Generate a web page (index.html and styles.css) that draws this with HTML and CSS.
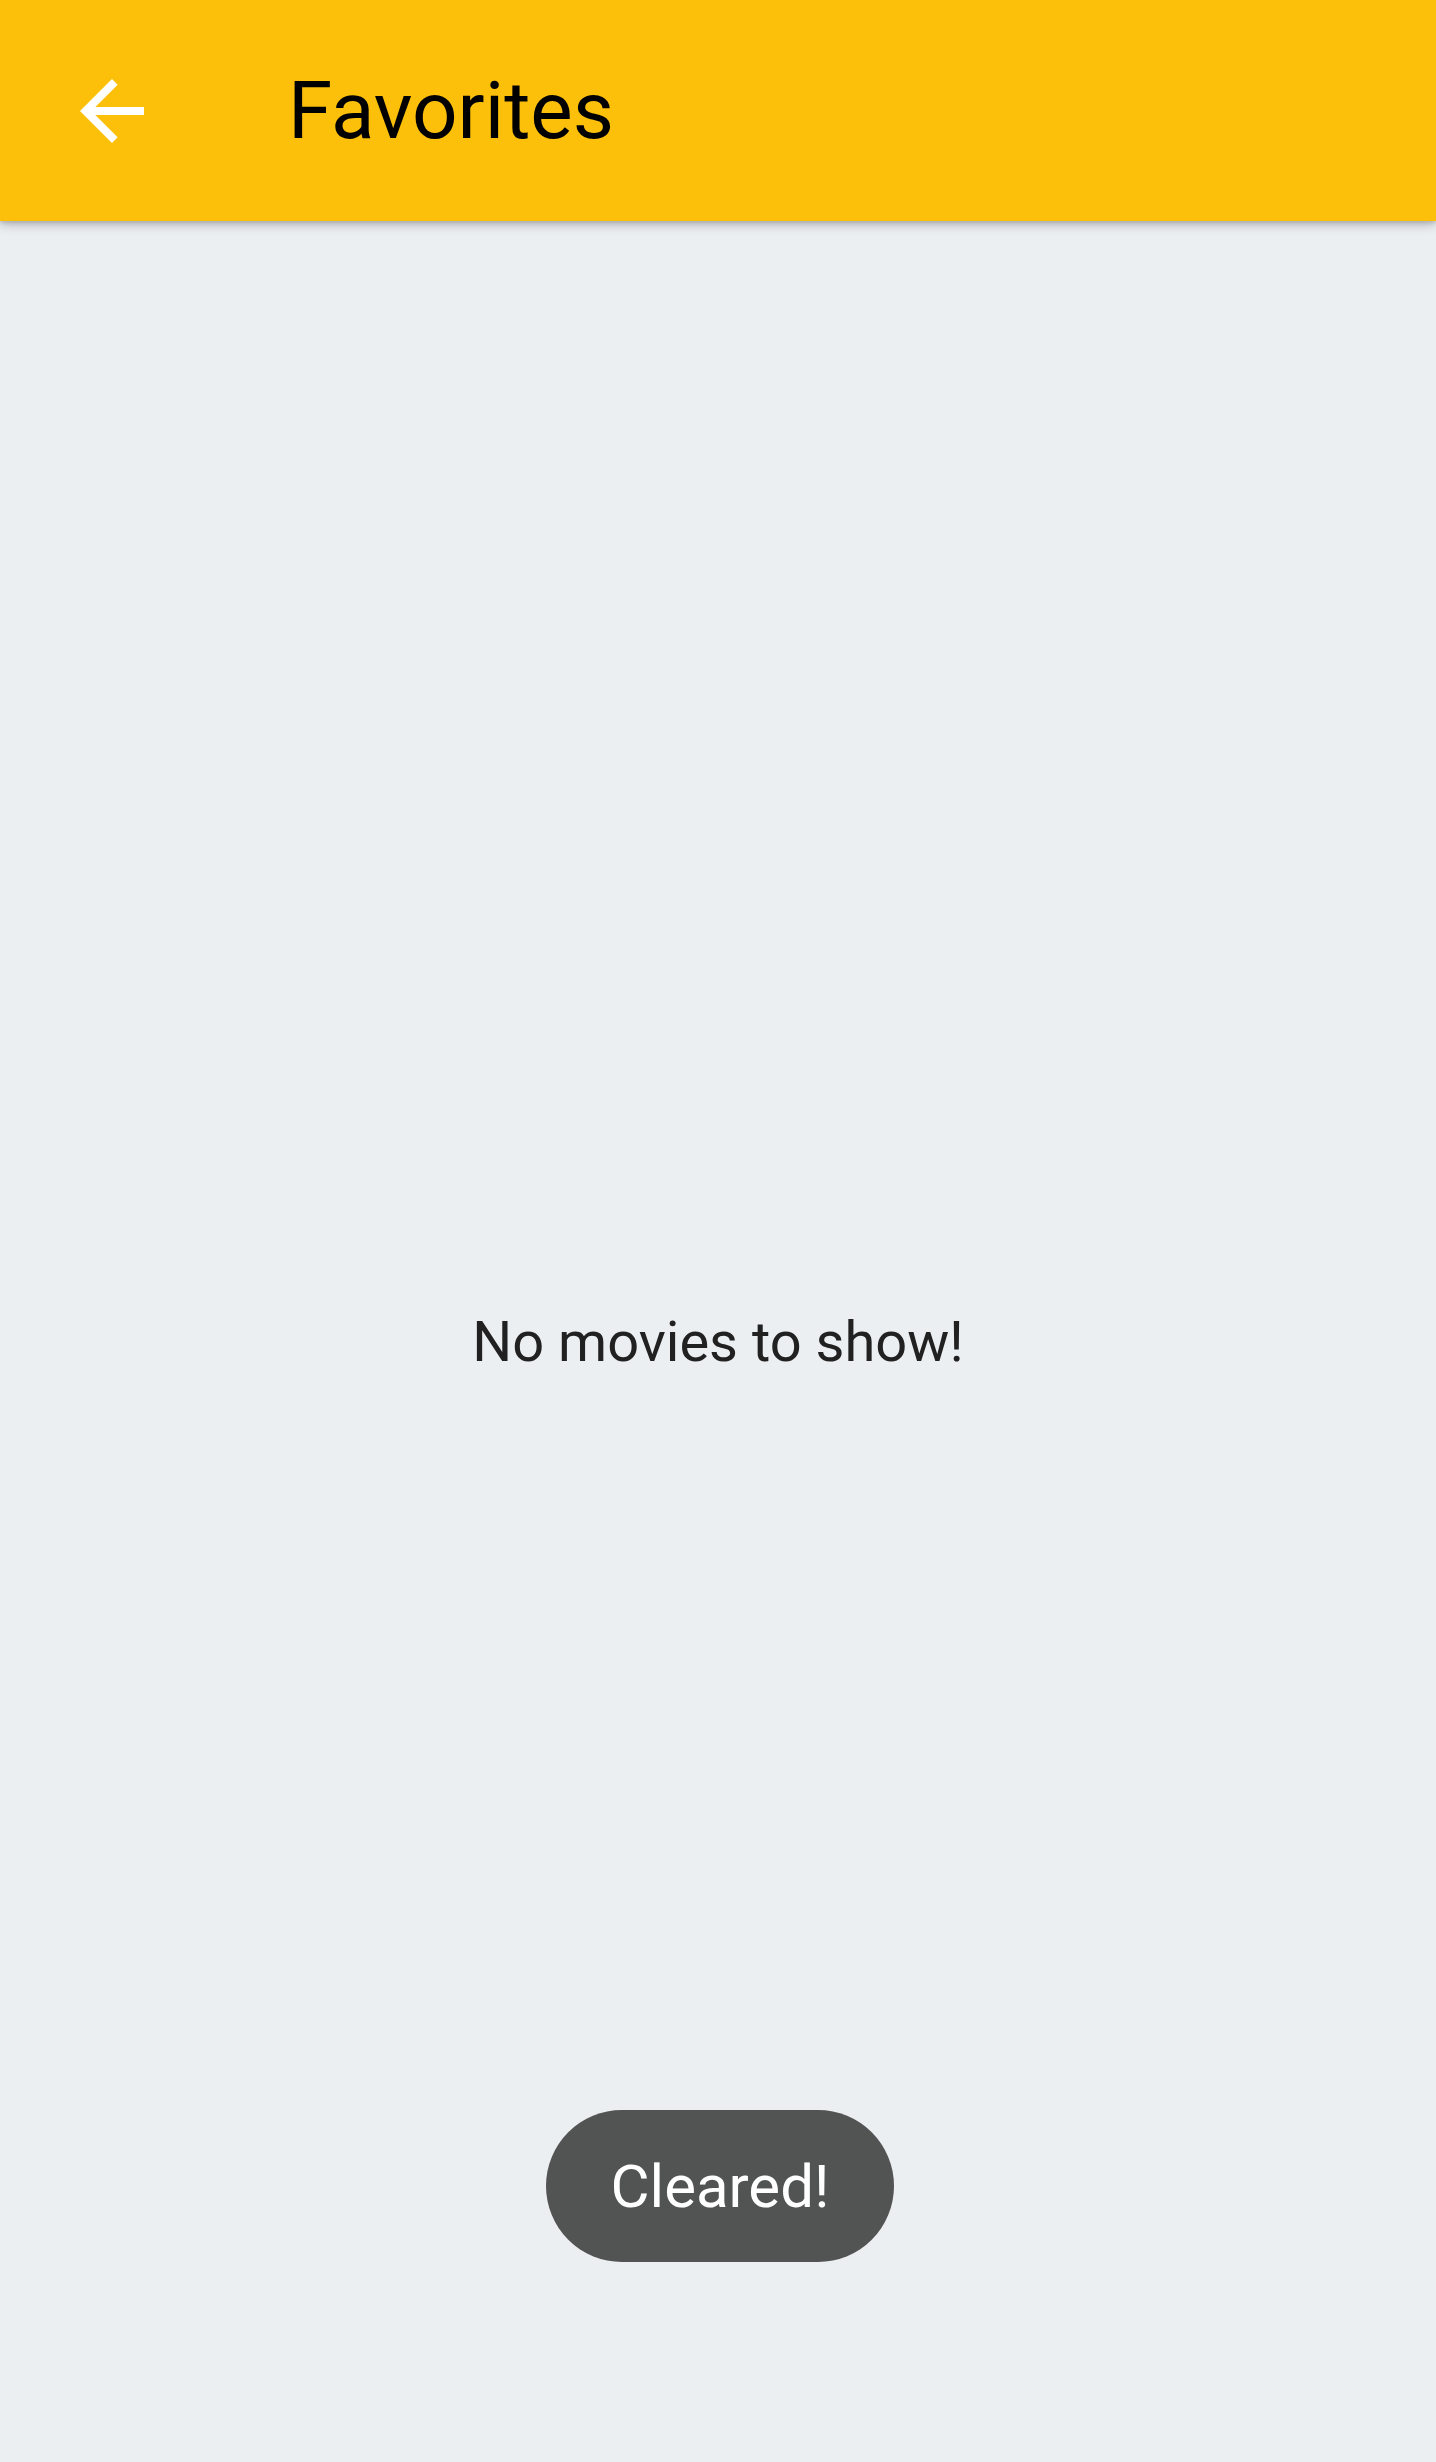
FILE: index.html
```html
<!DOCTYPE html>
<html lang="en">
<head>
<meta charset="utf-8">
<title>Favorites</title>
<link rel="stylesheet" href="styles.css">
</head>
<body>
<div class="screen">
  <header class="appbar">
    <button class="nav-btn" aria-label="Back">
      <svg class="nav-icon" viewBox="0 0 24 24" width="96" height="96">
        <path fill="#ffffff" d="M20 11H7.83l5.59-5.59L12 4l-8 8 8 8 1.41-1.41L7.83 13H20v-2z"/>
      </svg>
    </button>
    <h1 class="title">Favorites</h1>
  </header>
  <main class="content">
    <p class="empty">No movies to show!</p>
  </main>
  <div class="toast">Cleared!</div>
</div>
</body>
</html>
```
FILE: styles.css
```css
html, body {
  margin: 0;
  padding: 0;
}
body {
  background: #eceff1;
  font-family: Roboto, "Noto Sans", sans-serif;
}
.screen {
  position: relative;
  width: 1436px;
  height: 2462px;
  display: flex;
  flex-direction: column;
  overflow: hidden;
}
.appbar {
  height: 221px;
  flex: none;
  background: #fdc00a;
  display: flex;
  align-items: center;
  box-shadow: 0 4px 10px rgba(0, 0, 0, 0.22), 0 2px 4px rgba(0, 0, 0, 0.12);
  position: relative;
  z-index: 1;
}
.nav-btn {
  width: 96px;
  height: 96px;
  margin-left: 64px;
  padding: 0;
  border: 0;
  background: transparent;
  display: flex;
}
.nav-icon {
  display: block;
}
.title {
  margin: 0 0 0 128px;
  font-size: 80px;
  font-weight: 400;
  color: #000000;
  line-height: 1;
}
.content {
  flex: 1;
  display: flex;
  align-items: center;
  justify-content: center;
}
.empty {
  margin: 0;
  font-size: 56px;
  color: #212121;
  line-height: 1;
}
.toast {
  position: absolute;
  left: 546px;
  top: 2110px;
  width: 348px;
  height: 152px;
  border-radius: 76px;
  background: #525353;
  color: #ffffff;
  font-size: 60px;
  display: flex;
  align-items: center;
  justify-content: center;
}
```
